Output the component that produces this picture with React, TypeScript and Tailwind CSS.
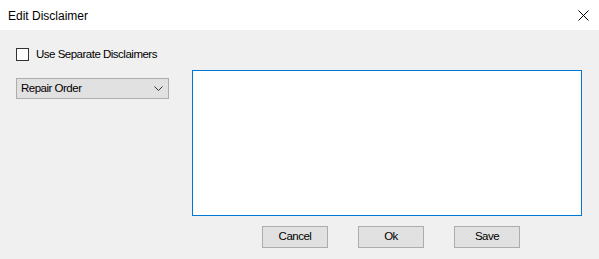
import { useState } from 'react';

// Windows-style "Edit Disclaimer" dialog.
export default function App() {
  const [separate, setSeparate] = useState(false);
  const [text, setText] = useState('');

  return (
    <div className="flex h-[259px] w-[599px] flex-col bg-[#f0f0f0] text-[12px] text-black" style={{ fontFamily: '"Liberation Sans", Arial, sans-serif' }}>
      <div className="flex h-[30px] shrink-0 items-center justify-between bg-white pl-2 pr-[10px]">
        <span className="pt-[1px]">Edit Disclaimer</span>
        <svg width="11" height="11" viewBox="0 0 11 11" className="text-black">
          <path d="M0.5 0.5 L10.5 10.5 M10.5 0.5 L0.5 10.5" stroke="currentColor" strokeWidth="1" fill="none" />
        </svg>
      </div>

      <div className="flex flex-col pl-4 pt-[18px] text-[11.5px] tracking-[-0.5px]">
        <label className="flex h-[13px] items-center gap-[7px]">
          <input
            type="checkbox"
            checked={separate}
            onChange={(e) => setSeparate(e.target.checked)}
            className="m-0 h-[13px] w-[13px] appearance-none border border-[#333] bg-white"
          />
          <span>Use Separate Disclaimers</span>
        </label>

        <div className="mt-[9px] flex">
          <div className="w-[153px] pt-[8px]">
            <div className="flex h-[21px] items-center justify-between border border-[#adadad] bg-[#e1e1e1] pl-[4px] pr-[5px]">
              <span>Repair Order</span>
              <svg width="9" height="5" viewBox="0 0 9 5">
                <path d="M0.5 0.5 L4.5 4.5 L8.5 0.5" stroke="#333" strokeWidth="1" fill="none" />
              </svg>
            </div>
          </div>
          <textarea
            value={text}
            onChange={(e) => setText(e.target.value)}
            className="ml-[23px] h-[146px] w-[390px] resize-none border border-[#0078d7] bg-white outline-none"
          />
        </div>

        <div className="mt-[10px] flex gap-[30px] pl-[246px]">
          {['Cancel', 'Ok', 'Save'].map((b) => (
            <button key={b} className="h-[22px] w-[66px] border border-[#adadad] bg-[#e1e1e1]">
              {b}
            </button>
          ))}
        </div>
      </div>
    </div>
  );
}
